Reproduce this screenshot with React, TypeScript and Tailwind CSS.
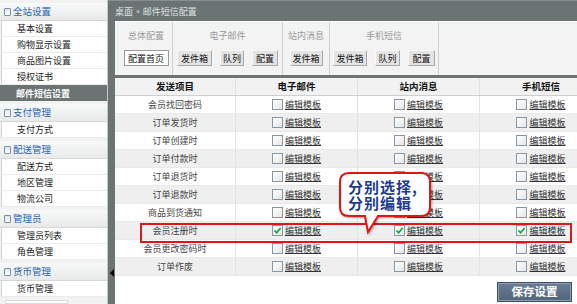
import React from "react";

const font = { fontFamily: '"Noto Sans CJK SC", "Noto Sans", sans-serif' };

const groups = [
  { title: "全站设置", items: ["基本设置", "购物显示设置", "商品图片设置", "授权证书", "邮件短信设置"], active: 4 },
  { title: "支付管理", items: ["支付方式"], active: -1 },
  { title: "配送管理", items: ["配送方式", "地区管理", "物流公司"], active: -1 },
  { title: "管理员", items: ["管理员列表", "角色管理"], active: -1 },
  { title: "货币管理", items: ["货币管理"], active: -1 },
];

const rows = [
  "会员找回密码",
  "订单发货时",
  "订单创建时",
  "订单付款时",
  "订单退货时",
  "订单退款时",
  "商品到货通知",
  "会员注册时",
  "会员更改密码时",
  "订单作废",
];

function Btn({ label, w, selected }: { label: string; w: string; selected?: boolean }) {
  return (
    <div
      className={
        "h-[16px] flex items-center justify-center text-[9px] leading-none text-[#111] border " +
        w +
        (selected
          ? " bg-white border-[#9a9a9a]"
          : " bg-[#e4e4e4] border-t-[#f8f8f8] border-l-[#f8f8f8] border-b-[#a8a8a8] border-r-[#a8a8a8]")
      }
    >
      {label}
    </div>
  );
}

function Group({ label, w, children }: { label: string; w: string; children: React.ReactNode }) {
  return (
    <div className={"flex flex-col items-center border-r border-[#cfcfcf] shrink-0 " + w}>
      <div className="mt-[8px] h-[12px] leading-[12px] text-[9px] text-[#9a9a9a]">{label}</div>
      <div className="mt-[8px] flex gap-[8px]">{children}</div>
    </div>
  );
}

function Check({ checked }: { checked?: boolean }) {
  return (
    <span className="w-[11px] h-[11px] border border-[#8797a8] bg-gradient-to-br from-[#ffffff] to-[#e6e6e6] flex items-center justify-center shrink-0">
      {checked && (
        <svg width="9" height="9" viewBox="0 0 9 9">
          <path d="M1.5 4.5 L3.6 6.8 L7.6 2" fill="none" stroke="#1f9a2a" strokeWidth="1.6" />
        </svg>
      )}
    </span>
  );
}

function Cell({ checked }: { checked?: boolean }) {
  return (
    <div className="flex items-center justify-center gap-[2px] border-r border-[#e2e2e2]">
      <Check checked={checked} />
      <span className="text-[9px] text-[#333] underline leading-none">编辑模板</span>
    </div>
  );
}

export default function App() {
  return (
    <div className="w-[577px] h-[304px] overflow-hidden flex relative bg-white" style={font}>
      {/* Sidebar */}
      <div className="w-[108px] shrink-0 h-full flex flex-col bg-[#f2f2f2] pt-[3px] gap-[3px] border-r border-[#c8c8c8]">
        {groups.map((g) => (
          <div key={g.title} className="flex flex-col">
            <div className="h-[18px] flex items-center pl-[4px] gap-[2px] bg-gradient-to-b from-[#f8f9f9] to-[#e8eaea] border-b border-[#d6d6d6]">
              <span className="w-[7px] h-[8px] border border-[#7d8ea3] bg-gradient-to-b from-[#dbe6f3] to-white rounded-[1px]" />
              <span className="text-[9.5px] text-[#2a62b2] leading-none">{g.title}</span>
            </div>
            {g.items.map((it, i) =>
              i === g.active ? (
                <div key={it} className="h-[16px] flex items-center pl-[16px] bg-[#6b7373] text-white font-bold text-[9px] leading-none">
                  {it}
                </div>
              ) : (
                <div key={it} className="h-[16px] flex items-center pl-[15px] bg-white border-l border-[#d4d4d4] ml-[1px] border-b border-b-[#ececec] text-[9px] text-[#222] leading-none">
                  {it}
                </div>
              )
            )}
          </div>
        ))}
        <div className="ml-[5px] w-[63px] h-[10px] bg-white border border-[#dcdcdc]" />
      </div>

      {/* Right side */}
      <div className="flex-1 min-w-0 h-full flex flex-col bg-[#6b7373] relative">
        <div className="h-[21px] flex items-center pl-[7px] text-[9px] text-[#dfe3e3] leading-none border-t border-[#8a9090]">
          桌面 <span className="mx-[3px] text-[8px]">»</span> 邮件短信配置
        </div>
        <div className="ml-[7px] flex-1 flex flex-col min-h-0 min-w-0">
          {/* Toolbar */}
          <div className="h-[54px] bg-[#f3f3f3] border-t border-[#fdfdfd] flex">
            <Group label="总体配置" w="w-[58px] pl-[5px]">
              <Btn label="配置首页" w="w-[45px]" selected />
            </Group>
            <Group label="电子邮件" w="w-[110px]">
              <Btn label="发件箱" w="w-[35px]" />
              <Btn label="队列" w="w-[24px]" />
              <Btn label="配置" w="w-[26px]" />
            </Group>
            <Group label="站内消息" w="w-[47px]">
              <Btn label="发件箱" w="w-[33px]" />
            </Group>
            <Group label="手机短信" w="w-[109px]">
              <Btn label="发件箱" w="w-[34px]" />
              <Btn label="队列" w="w-[25px]" />
              <Btn label="配置" w="w-[27px]" />
            </Group>
          </div>
          {/* Table area */}
          <div className="mt-[3px] flex-1 bg-white overflow-hidden flex flex-col">
            <div className="grid grid-cols-[121px_122px_122px_123px] w-[488px] shrink-0 h-[18px] bg-[#f2f2f2] border-b border-[#cfcfcf] text-[9.5px] font-bold text-[#111]">
              {["发送项目", "电子邮件", "站内消息", "手机短信"].map((h) => (
                <div key={h} className="flex items-center justify-center border-r border-[#e0e0e0]">
                  {h}
                </div>
              ))}
            </div>
            {rows.map((r, i) => (
              <div
                key={r}
                className={
                  "grid grid-cols-[121px_122px_122px_123px] w-[488px] shrink-0 h-[18px] border-b border-[#e9e9e9] " +
                  (i % 2 === 1 ? "bg-[#efefef]" : "bg-white")
                }
              >
                <div className="flex items-center justify-center border-r border-[#e2e2e2] text-[9px] text-[#444]">{r}</div>
                <Cell checked={i === 7} />
                <Cell checked={i === 7} />
                <Cell checked={i === 7} />
              </div>
            ))}
            <div className="flex justify-end pr-[5px] mt-[6px]">
              <div className="w-[75px] h-[20px] flex items-center justify-center bg-gradient-to-b from-[#6b7d95] to-[#53647b] border border-[#3f4e62] shadow-[inset_0_0_0_1px_#8d9db2] text-white font-bold text-[11.5px] leading-none">
                保存设置
              </div>
            </div>
          </div>
        </div>
        {/* collapse arrow */}
        <span className="absolute left-[2px] top-[269px] w-0 h-0 border-y-[4px] border-y-transparent border-r-[4px] border-r-black" />
      </div>

      {/* Red highlight rectangle over the row */}
      <div className="absolute left-[140px] top-[223px] w-[432px] h-[20px] border-2 border-[#e21414] pointer-events-none" />

      {/* Callout */}
      <div className="absolute left-[338px] top-[171px] w-[96px] h-[66px]">
        <svg width="96" height="66" viewBox="0 0 96 66" className="absolute left-0 top-0" style={{ filter: "drop-shadow(1px 1px 1px rgba(0,0,0,0.35))" }}>
          <path
            d="M11 2 H83 Q92 2 92 11 V36 Q92 45 83 45 H40 L30 61 L27 45 H11 Q2 45 2 36 V11 Q2 2 11 2 Z"
            fill="white"
            stroke="#e21414"
            strokeWidth="2"
          />
        </svg>
        <div className="absolute left-[10px] top-[8px] text-[15px] leading-[16px] font-bold tracking-[1px] text-[#1d3c8e] whitespace-nowrap">
          <div>分别选择,</div>
          <div>分别编辑</div>
        </div>
      </div>
    </div>
  );
}
